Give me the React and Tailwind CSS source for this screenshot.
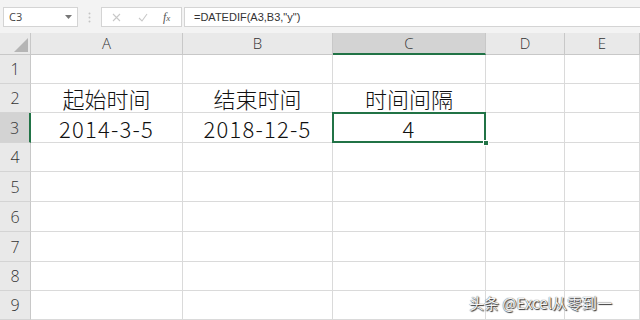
import React from 'react';

const cols = [
  { key: 'A', w: 'w-[152px]' },
  { key: 'B', w: 'w-[150px]' },
  { key: 'C', w: 'w-[153px]' },
  { key: 'D', w: 'w-[79px]' },
  { key: 'E', w: 'flex-1' },
];

const rows = [
  { n: 1, h: 'h-[29px]', cells: {} },
  { n: 2, h: 'h-[29px]', cells: { A: '起始时间', B: '结束时间', C: '时间间隔' } },
  { n: 3, h: 'h-[30px]', cells: { A: '2014-3-5', B: '2018-12-5', C: '4' } },
  { n: 4, h: 'h-[29px]', cells: {} },
  { n: 5, h: 'h-[30px]', cells: {} },
  { n: 6, h: 'h-[30px]', cells: {} },
  { n: 7, h: 'h-[30px]', cells: {} },
  { n: 8, h: 'h-[29px]', cells: {} },
  { n: 9, h: 'h-[29px]', cells: {} },
];

const FormulaBar = () => (
  <div className="h-[33px] bg-[#f3f3f3] pt-[7px] flex items-start font-['Open_Sans',sans-serif]">
    <div className="ml-[3px] w-[75px] h-[20px] bg-white border border-[#d4d4d4] flex items-center justify-between pl-[5px] pr-[5px]">
      <span className="text-[11px] text-[#444]">C3</span>
      <svg width="7" height="4" viewBox="0 0 7 4"><path d="M0 0h7L3.5 4z" fill="#777" /></svg>
    </div>
    <div className="w-[23px] h-[20px] flex items-center justify-center">
      <svg width="3" height="11" viewBox="0 0 3 11">
        <circle cx="1.5" cy="1.5" r="1" fill="#c4c4c4" />
        <circle cx="1.5" cy="5.5" r="1" fill="#c4c4c4" />
        <circle cx="1.5" cy="9.5" r="1" fill="#c4c4c4" />
      </svg>
    </div>
    <div className="w-[81px] h-[20px] bg-white border border-[#d4d4d4] flex items-center">
      <svg className="ml-[10px]" width="9" height="9" viewBox="0 0 9 9">
        <path d="M1 1l7 7M8 1L1 8" stroke="#c8c8c8" strokeWidth="1.1" />
      </svg>
      <svg className="ml-[17px]" width="10" height="9" viewBox="0 0 10 9">
        <path d="M1 5l3 3 5-7" stroke="#c8c8c8" strokeWidth="1.1" fill="none" />
      </svg>
      <span className="ml-[15px] text-[12px] italic text-[#555] font-['Liberation_Serif',serif]">f<span className="text-[9px]">x</span></span>
    </div>
    <div className="ml-[2px] flex-1 h-[20px] bg-white border border-[#d4d4d4] border-r-0 flex items-center pl-[9px]">
      <span className="text-[11px] text-[#333] font-['Liberation_Sans',sans-serif]">=DATEDIF(A3,B3,"y")</span>
    </div>
  </div>
);

const HeaderRow = () => (
  <div className="h-[22px] flex bg-[#e9e9e9] font-['Open_Sans',sans-serif] font-light">
    <div className="w-[31px] border-r border-b border-[#c8c8c8] flex items-end justify-end pr-[2px] pb-[2px]">
      <svg width="14" height="14" viewBox="0 0 14 14"><path d="M14 0v14H0z" fill="#b5b5b5" /></svg>
    </div>
    {cols.map(c => (
      <div
        key={c.key}
        className={
          c.w +
          ' flex items-center justify-center text-[15px] text-[#333] border-r border-[#c8c8c8] ' +
          (c.key === 'C' ? 'bg-[#d3d3d3] border-b-2 border-b-[#217346]' : 'border-b border-b-[#c8c8c8]')
        }
      >
        {c.key}
      </div>
    ))}
  </div>
);

const App = () => {
  return (
    <div className="relative w-[640px] h-[320px] overflow-hidden bg-white">
      <FormulaBar />
      <HeaderRow />
      {rows.map(r => (
        <div key={r.n} className={r.h + ' flex'}>
          <div
            className={
              'w-[31px] flex items-end justify-center pb-[2px] text-[16px] font-light text-[#333] font-[\'Open_Sans\',sans-serif] border-b border-[#d4d4d4] ' +
              (r.n === 3 ? 'bg-[#d3d3d3] border-r-2 border-r-[#217346]' : 'bg-[#e9e9e9] border-r border-r-[#c8c8c8]')
            }
          >
            {r.n}
          </div>
          {cols.map(c => {
            const val = r.cells[c.key];
            const selected = r.n === 3 && c.key === 'C';
            return (
              <div
                key={c.key}
                className={
                  c.w +
                  ' relative flex items-end justify-center pb-[1px] border-r border-b border-[#dadada] text-[22px] leading-[26px] font-light text-[#111] font-[\'Noto_Sans_CJK_SC\',sans-serif] ' +
                  (r.n === 3 ? 'tracking-[1.2px]' : '')
                }
              >
                {val}
                {selected && (
                  <>
                    <div className="absolute z-10 left-[-1px] top-[-1px] right-[-1px] bottom-[-1px] border-2 border-[#217346]" />
                    <div className="absolute z-10 right-[-4px] bottom-[-4px] w-[6px] h-[6px] bg-[#217346] border border-white" />
                  </>
                )}
              </div>
            );
          })}
        </div>
      ))}
      <div className="absolute left-[469px] top-[292px] text-[15px] text-[#f4f4f4] font-['Noto_Sans_CJK_SC',sans-serif] [text-shadow:0_0_1px_#222,1px_1px_1px_#333]">
        头条 @Excel从零到一
      </div>
    </div>
  );
};

export default App;
